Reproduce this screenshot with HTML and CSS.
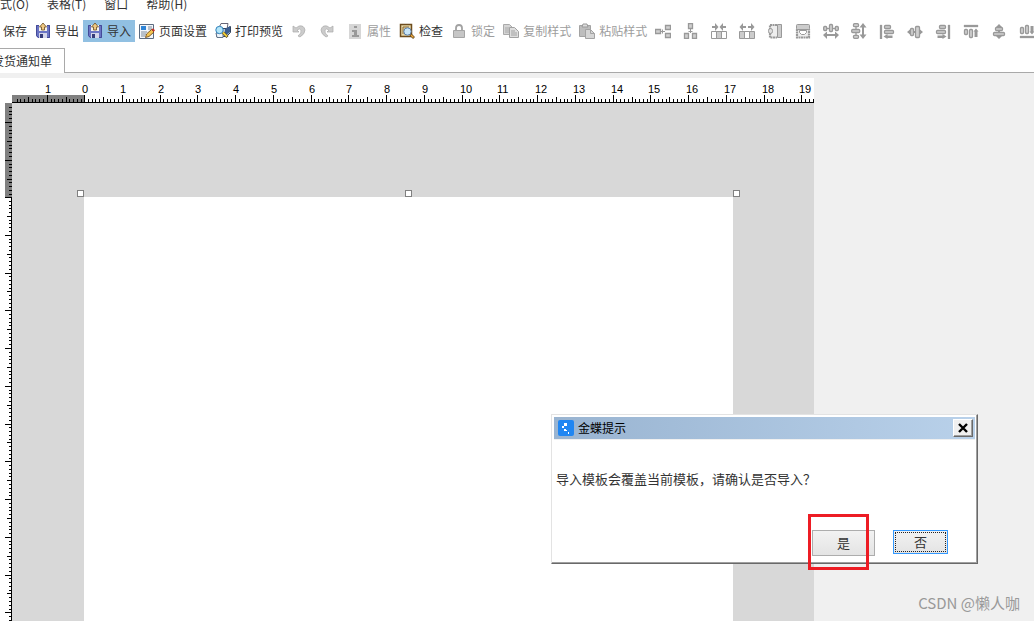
FILE: index.html
```html
<!DOCTYPE html>
<html lang="zh-CN">
<head>
<meta charset="utf-8">
<title>发货通知单</title>
<link rel="stylesheet" href="styles.css">
</head>
<body>
<nav class="menu">
  <button class="menu-item">式(O)</button>
  <button class="menu-item">表格(T)</button>
  <button class="menu-item">窗口</button>
  <button class="menu-item">帮助(H)</button>
</nav>

<div class="toolbar">
  <button class="tool first">保存</button>
  <button class="tool">
    <svg class="icon" viewBox="0 0 16 16"><path d="M1 2h14v13H3l-2-2z" fill="#6a74c4"/><path d="M1.500 2.500h13v12h-11l-2-2z" fill="none" stroke="#444b98"/><path d="M4 2h8v6H4z" fill="#f6f3ea"/><path d="M8 0l3.500 4H9.500v3h-3V4h-2z" fill="#f0c982" stroke="#6b4d22" stroke-width=".8"/><path d="M4 10h8v5H4z" fill="#d4d6ea"/><path d="M5 11h3v4H5z" fill="#343a78"/></svg>
    导出</button>
  <button class="tool active">
    <svg class="icon" viewBox="0 0 16 16"><path d="M1 2h14v13H3l-2-2z" fill="#6a74c4"/><path d="M1.500 2.500h13v12h-11l-2-2z" fill="none" stroke="#444b98"/><path d="M4 2h8v6H4z" fill="#f6f3ea"/><path d="M8 0l3.500 4H9.500v3h-3V4h-2z" fill="#f0c982" stroke="#6b4d22" stroke-width=".8"/><path d="M4 10h8v5H4z" fill="#d4d6ea"/><path d="M5 11h3v4H5z" fill="#343a78"/></svg>
    导入</button>
  <button class="tool">
    <svg class="icon" viewBox="0 0 16 16"><path d="M.5 1.500h14v14H.5z" fill="#f3f6fa" stroke="#5b6b80"/><path d="M2 3h5v4H2z" fill="#2f84d6"/><path d="M9 4h4M9 6h4M2 9h6M2 11h5M2 13h4" stroke="#7d8b9c"/><path d="M6.500 14.500l1-3.500 5-4.500 2.500 2.500-5 4.500z" fill="#f3c552" stroke="#6f4a1d" stroke-width=".9"/><path d="M12.500 6.500l1.500-1.300 2 2-1.300 1.600z" fill="#c8322a"/></svg>
    页面设置</button>
  <button class="tool">
    <svg class="icon" viewBox="0 0 16 16"><path d="M4 5l2-4.500h7L12 6z" fill="#fff" stroke="#667"/><path d="M1.500 5.500h10l4-2v6l-4 4h-10z" fill="#b5c4d6" stroke="#33465e"/><path d="M10 6l5-3v6l-5 4z" fill="#3c5e91"/><path d="M2 14.500h6V10H1z" fill="#eef4fa" stroke="#627389"/><circle cx="4.500" cy="7" r="3.700" fill="#b4e5f8" stroke="#3182bd"/><path d="M8 9.500l4.500 4.500" stroke="#4a3e1d" stroke-width="3"/><path d="M8 9.500l4 4" stroke="#f0ce3a" stroke-width="1.800"/></svg>
    打印预览</button>
  <button class="tool icon-only" aria-label="撤销"><svg class="icon" viewBox="0 0 16 16"><path d="M2 3v6h6L6 7q3-2 4 0 1 3-3 6l2 1q5-3 5-7-1-5-6-4L5 5z" fill="#ccc" stroke="#aaa" stroke-width=".7"/></svg></button>
  <button class="tool icon-only" aria-label="重做"><svg class="icon" viewBox="0 0 16 16"><path d="M14 3v6H8l2-2q-3-2-4 0-1 3 3 6l-2 1Q2 11 2 7q1-5 6-4l3 2z" fill="#ccc" stroke="#aaa" stroke-width=".7"/></svg></button>
  <button class="tool" disabled>
    <svg class="icon" viewBox="0 0 16 16"><path d="M2 1h12v15H2z" fill="#d6d6d6"/><path d="M7 3h3v2H7zM5 7h5v5h2v2H5v-2h2V9H5z" fill="#999"/></svg>
    属性</button>
  <button class="tool">
    <svg class="icon" viewBox="0 0 16 16"><path d="M1.500 1.500h11v12h-11z" fill="#e9d8a8" stroke="#6d4c1d" stroke-width="1.500"/><path d="M4 4h6M4 4v7" stroke="#8a6a35"/><circle cx="8.500" cy="8.500" r="3.700" fill="#c7e5f8" stroke="#5d7fa8"/><path d="M11.500 11.500l3.500 3.500" stroke="#5d421d" stroke-width="2.600"/><path d="M12 12l2.500 2.500" stroke="#f0aa3c" stroke-width="1.400"/></svg>
    检查</button>
  <button class="tool" disabled>
    <svg class="icon" viewBox="0 0 16 16"><path d="M5 8V5q0-3 3-3t3 3v3" fill="none" stroke="#a2a2a2" stroke-width="1.800"/><path d="M2.500 7.500h11v7h-11z" fill="#c6c6c6" stroke="#a5a5a5"/></svg>
    锁定</button>
  <button class="tool" disabled>
    <svg class="icon" viewBox="0 0 16 16"><path d="M.5 1.500h6l3 3v7h-9z" fill="#d5d5d5" stroke="#aaa"/><path d="M2 5h4M2 7h4M2 9h4" stroke="#aaa"/><path d="M6.500 4.500h5l4 4v6h-9z" fill="#dedede" stroke="#a2a2a2"/><path d="M8 8h4M8 10h6M8 12h6" stroke="#a2a2a2"/></svg>
    复制样式</button>
  <button class="tool" disabled>
    <svg class="icon" viewBox="0 0 16 16"><path d="M.5 2.500h11v11H.5z" fill="#bdbdbd" stroke="#a3a3a3"/><path d="M3 4l1-3h4l1 3z" fill="#ddd" stroke="#999"/><path d="M6.500 6.500h5l4 4v5h-9z" fill="#d5d5d5" stroke="#a3a3a3"/><path d="M11.500 6.500v4h4" fill="none" stroke="#a3a3a3"/></svg>
    粘贴样式</button>
  <button class="tool icon-only" aria-label="横向拆分"><svg class="icon" viewBox="0 0 16 16"><path d="M6 8.500h4M7.500 6.500v4" stroke="#999"/><g class="shape"><path d="M.5 6.500h5v4h-5zM10.500 2.500h5v4h-5zM10.500 10.500h5v4h-5z"/></g></svg></button>
  <button class="tool icon-only" aria-label="纵向拆分"><svg class="icon" viewBox="0 0 16 16"><path d="M7.500 5v5M5.500 8.500h4" stroke="#999"/><g class="shape"><path d="M5.500.500h4v5h-4zM1.500 10.500h4v5h-4zM9.500 10.500h4v5h-4z"/></g></svg></button>
  <button class="tool icon-only" aria-label="减小间距"><svg class="icon" viewBox="0 0 16 16"><path d="M1 3h3V0l3.500 4L4 8V5H1zM15 3h-3V0L8.500 4 12 8V5h3z" fill="#999"/><path d="M.5 8.500h15v7H.5z" fill="#fff" stroke="#999"/><path d="M5.500 8.500h5v7h-5z" fill="#ccc" stroke="#999"/></svg></button>
  <button class="tool icon-only" aria-label="增大间距"><svg class="icon" viewBox="0 0 16 16"><path d="M7 3H4V0L.5 4 4 8V5h3zM9 3h3V0l3.500 4L12 8V5H9z" fill="#999"/><path d="M.5 8.500h15v7H.5z" fill="#ccc" stroke="#999"/><path d="M5.500 8.500h5v7h-5z" fill="#fff" stroke="#999"/></svg></button>
  <button class="tool icon-only" aria-label="等高"><svg class="icon" viewBox="0 0 16 16"><path d="M10 2H3v12.500h7" fill="#eee" stroke="#999" stroke-width="2.200" stroke-dasharray="2 .5"/><path d="M10.500 1.500h4v13h-4z" fill="#ccc" stroke="#999"/><rect x="1.500" y="5.500" width="4" height="5" rx="2" fill="#ddd" stroke="#999"/></svg></button>
  <button class="tool icon-only" aria-label="等宽"><svg class="icon" viewBox="0 0 16 16"><path d="M2 6v8.500h12V6" fill="#eee" stroke="#999" stroke-width="2.200" stroke-dasharray="2 .5"/><rect x="1.500" y="1.500" width="13" height="5" rx="1" fill="#ccc" stroke="#999"/><path d="M4.500 7.500h7v2l-2 2h-3l-2-2z" fill="#fff" stroke="#999"/></svg></button>
  <button class="tool icon-only" aria-label="横向等距"><svg class="icon" viewBox="0 0 16 16"><g class="shape"><path d="M0 5.500h16"/><rect x=".7" y="3.500" width="3" height="4" rx="1"/><rect x="6.500" y="1.500" width="3" height="7" rx="1"/><rect x="12.300" y="3.500" width="3" height="4" rx="1"/></g><path d="M0 12l4-3.500V11h8V8.500l4 3.500-4 4V13H4v3z" fill="#999"/></svg></button>
  <button class="tool icon-only" aria-label="纵向等距"><svg class="icon" viewBox="0 0 16 16"><g class="shape"><path d="M5 0v16"/><rect x="2.500" y=".7" width="5" height="3" rx="1"/><rect x=".7" y="6.500" width="8" height="3" rx="1"/><rect x="2.500" y="12.300" width="5" height="3" rx="1"/></g><path d="M12 0l3.500 4.500H13v7h2.500L12 16l-3.500-4.500H11v-7H8.500z" fill="#999"/></svg></button>
  <button class="tool icon-only" aria-label="左对齐"><svg class="icon" viewBox="0 0 16 16"><g class="shape"><path d="M1.500 2.500h1v13h-1z"/><rect x="5.500" y="2.500" width="6" height="3" rx="1"/><rect x="5.500" y="7.500" width="9" height="3" rx="1"/></g><path d="M4.500 13.500l4-2.500v1.500h5V15h-5v1z" fill="#999"/></svg></button>
  <button class="tool icon-only" aria-label="水平居中"><svg class="icon" viewBox="0 0 16 16"><path d="M0 9l3-2.500v5zM16 9l-3-2.500v5z" fill="#999"/><path d="M2 9h12" stroke="#999" stroke-width="2"/><g class="shape"><rect x="3.500" y="5.500" width="3" height="7" rx="1"/><rect x="8.500" y="3.500" width="4" height="11" rx="1"/></g></svg></button>
  <button class="tool icon-only" aria-label="右对齐"><svg class="icon" viewBox="0 0 16 16"><g class="shape"><path d="M13.500 2.500h1v13h-1z"/><rect x="4.500" y="2.500" width="6" height="3" rx="1"/><rect x="1.500" y="7.500" width="9" height="3" rx="1"/></g><path d="M11.500 13.500l-4-2.500v1.500h-5V15h5v1z" fill="#999"/></svg></button>
  <button class="tool icon-only" aria-label="顶端对齐"><svg class="icon" viewBox="0 0 16 16"><g class="shape"><path d="M1.500 2.500h13v1h-13z"/><rect x="1.500" y="6.500" width="3" height="5" rx="1"/><rect x="6.500" y="6.500" width="3" height="8" rx="1"/></g><path d="M13 5.500l2.500 3h-1V14h-3V8.500h-1z" fill="#999"/></svg></button>
  <button class="tool icon-only" aria-label="垂直居中"><svg class="icon" viewBox="0 0 16 16"><path d="M8 1l3 3H5zM8 16l3-3H5z" fill="#999"/><path d="M8 3v11" stroke="#999" stroke-width="2"/><g class="shape"><rect x="4.500" y="4.500" width="7" height="3" rx="1"/><rect x="2.500" y="9.500" width="11" height="3" rx="1"/></g></svg></button>
  <button class="tool icon-only" aria-label="底端对齐"><svg class="icon" viewBox="0 0 16 16"><g class="shape"><path d="M1.500 13.500h13v1h-13z"/><rect x="1.500" y="4.500" width="3" height="6" rx="1"/><rect x="6.500" y="2.500" width="3" height="8" rx="1"/></g><path d="M13 11.500l2.500-3h-1V3h-3v5.500h-1z" fill="#999"/></svg></button>
</div>

<div class="tabs">
  <button class="tab">发货通知单</button>
</div>

<main class="workspace">
  <div class="designer">
    <svg class="ruler-h" id="ruler-h"></svg>
    <svg class="ruler-v" id="ruler-v"></svg>
    <div class="canvas">
      <div class="sheet">
        <i class="handle left"></i><i class="handle middle"></i><i class="handle right"></i>
      </div>
    </div>
  </div>
</main>

<section class="dialog" role="dialog" aria-labelledby="dialog-title">
  <header class="title-bar">
    <svg class="icon" viewBox="0 0 16 16"><rect width="16" height="16" rx="2" fill="#1f86f2"/><path d="M6 3h3v3H6zM4 6h2v2H4zM6 9h2v2H6zM8 10h1v1H8zM10 12h1v2h-1z" fill="#fff"/></svg>
    <h1 class="title" id="dialog-title">金蝶提示</h1>
    <button class="close" aria-label="关闭"><svg viewBox="0 0 10 10" width="10" height="10"><path d="M1 1l8 8M9 1L1 9" stroke="#000" stroke-width="2.400"/></svg></button>
  </header>
  <p class="message">导入模板会覆盖当前模板，请确认是否导入？</p>
  <div class="actions">
    <button class="answer yes">是<span class="mark"></span></button>
    <button class="answer no">否</button>
  </div>
</section>

<div class="watermark">CSDN @懒人咖</div>
<script src="rulers.js"></script>
</body>
</html>
```
FILE: styles.css
```css
* {
  box-sizing: border-box;
}

body {
  margin: 0;
  height: 100vh;
  display: flex;
  flex-direction: column;
  position: relative;
  overflow: hidden;
  background: #fff;
  color: #333;
  font: 12px/16px "Noto Sans CJK SC", sans-serif;
}

button {
  margin: 0;
  padding: 0;
  border: 0;
  background: none;
  color: inherit;
  font: inherit;
  white-space: nowrap;
}

.menu {
  height: 14px;
  display: flex;
  align-items: flex-end;
  gap: 18px;
}

.menu-item {
  height: 20px;
}

.toolbar {
  height: 34px;
  display: flex;
  align-items: center;
  overflow: hidden;
}

.tool {
  flex: none;
  height: 22px;
  padding: 0 4px;
  display: flex;
  align-items: center;
  gap: 4px;
}

.tool.first {
  padding-left: 3px;
}

.tool.active {
  background: #91c0e2;
}

.tool:disabled {
  color: #9d9d9d;
}

.tool.icon-only {
  margin-right: 4px;
}

.icon {
  width: 16px;
  height: 16px;
  flex: none;
}

.shape {
  fill: #d0d0d0;
  stroke: #999;
  stroke-width: 1.3;
}

.tabs {
  height: 25px;
  display: flex;
}

.tabs::after {
  content: "";
  flex: 1;
  border-bottom: 1px solid #a9a9a9;
}

.tab {
  margin-left: -10px;
  padding: 0 12px 0 2px;
  border: solid #a9a9a9;
  border-width: 1px 1px 0 0;
}

.workspace {
  flex: 1;
  min-height: 0;
  padding-top: 5px;
  background: #f0f0f0;
}

.designer {
  height: 100%;
  max-width: 814px;
  display: grid;
  grid-template: 25px 1fr / 12px 1fr;
  background: #fff;
}

.ruler-h {
  grid-column: 1 / 3;
  width: 100%;
  height: 25px;
  font: 11px "Liberation Sans", sans-serif;
}

.ruler-v {
  width: 12px;
  height: 100%;
}

.canvas {
  display: flex;
  padding: 94px 81px 0 72px;
  background: #d8d8d8;
}

.sheet {
  flex: 1;
  position: relative;
  background: #fff;
}

.handle {
  position: absolute;
  top: -7px;
  width: 7px;
  height: 7px;
  border: 1px solid #808080;
  background: #fff;
}

.handle.left {
  left: -7px;
}

.handle.middle {
  left: calc(50% - 4px);
}

.handle.right {
  right: -7px;
}

.dialog {
  position: absolute;
  top: 414px;
  right: 56px;
  width: 427px;
  padding: 2px 1px 7px 2px;
  border: 1px solid #e3e3e3;
  border-right-color: #696969;
  border-bottom-color: #696969;
  background: #fff;
  box-shadow: inset -1px -1px #a0a0a0;
}

.title-bar {
  height: 23px;
  margin-right: 1px;
  padding: 0 2px 0 4px;
  display: flex;
  align-items: center;
  gap: 4px;
  border-bottom: 1px solid #f0f0f0;
  background: linear-gradient(90deg, #99b4d1, #b9d1ea);
}

.title {
  flex: 1;
  margin: 0;
  color: #000;
  font-size: 12px;
  font-weight: 400;
}

.close {
  width: 20px;
  height: 18px;
  display: grid;
  place-items: center;
  border: 1px solid;
  border-color: #fff #696969 #696969 #fff;
  background: #f0f0f0;
  box-shadow: inset -1px -1px #a0a0a0;
}

.message {
  margin: 29px 2px 0;
  font-size: 13px;
  line-height: 20px;
}

.actions {
  margin-top: 41px;
  padding-right: 28px;
  display: flex;
  justify-content: flex-end;
  align-items: flex-start;
  gap: 18px;
}

.answer {
  position: relative;
  background: linear-gradient(#f2f2f2, #e4e4e4);
  font-size: 13px;
}

.yes {
  width: 63px;
  height: 26px;
  border: 1px solid #adadad;
}

.no {
  width: 55px;
  height: 24px;
  border: 1px solid #3399ff;
  outline: 1px dotted #222;
  outline-offset: -3px;
}

.mark {
  position: absolute;
  top: -17px;
  left: -5px;
  width: 61px;
  height: 56px;
  border: 3px solid #ed1c24;
}

.watermark {
  position: absolute;
  right: 14px;
  bottom: 7px;
  color: #999;
  font-size: 15px;
  line-height: 22px;
}
```
FILE: rulers.js
```js
const NS = "http://www.w3.org/2000/svg";
const CM = 37.76;

function add(parent, name, attrs) {
  const el = document.createElementNS(NS, name);
  for (const key in attrs) el.setAttribute(key, attrs[key]);
  parent.appendChild(el);
  return el;
}

function tickLength(mm) {
  if (mm % 10 === 0) return 7;
  return mm % 5 === 0 ? 5 : 3;
}

// Ticks before the origin snap towards it, the others to the nearest pixel.
function tickPosition(origin, mm) {
  const offset = mm * CM / 10;
  return origin + (mm < 0 ? Math.ceil(offset) : Math.round(offset));
}

function drawHorizontal(svg, origin, start) {
  const width = svg.clientWidth;
  add(svg, "rect", { x: start, y: 17, width: origin - start, height: 7, fill: "#808080" });
  add(svg, "rect", { x: start, y: 24, width: width - start, height: 1 });
  for (let mm = -18; ; mm++) {
    const x = tickPosition(origin, mm);
    if (x >= width) break;
    const len = tickLength(mm);
    add(svg, "rect", { x, y: 24 - len, width: 1, height: len });
    if (mm % 10 === 0) {
      add(svg, "text", { x: x - 2, y: 15 }).textContent = Math.abs(mm / 10);
    }
  }
}

function drawVertical(svg, origin) {
  const height = svg.clientHeight;
  add(svg, "rect", { x: 5, y: 0, width: 7, height: origin, fill: "#808080" });
  add(svg, "rect", { x: 11, y: origin, width: 1, height: height - origin });
  for (let mm = -24; ; mm++) {
    const y = tickPosition(origin, mm);
    if (y >= height) break;
    const len = tickLength(mm);
    add(svg, "rect", { x: 12 - len, y, width: len, height: 1 });
  }
}

drawHorizontal(document.getElementById("ruler-h"), 84, 12);
drawVertical(document.getElementById("ruler-v"), 94);
```
